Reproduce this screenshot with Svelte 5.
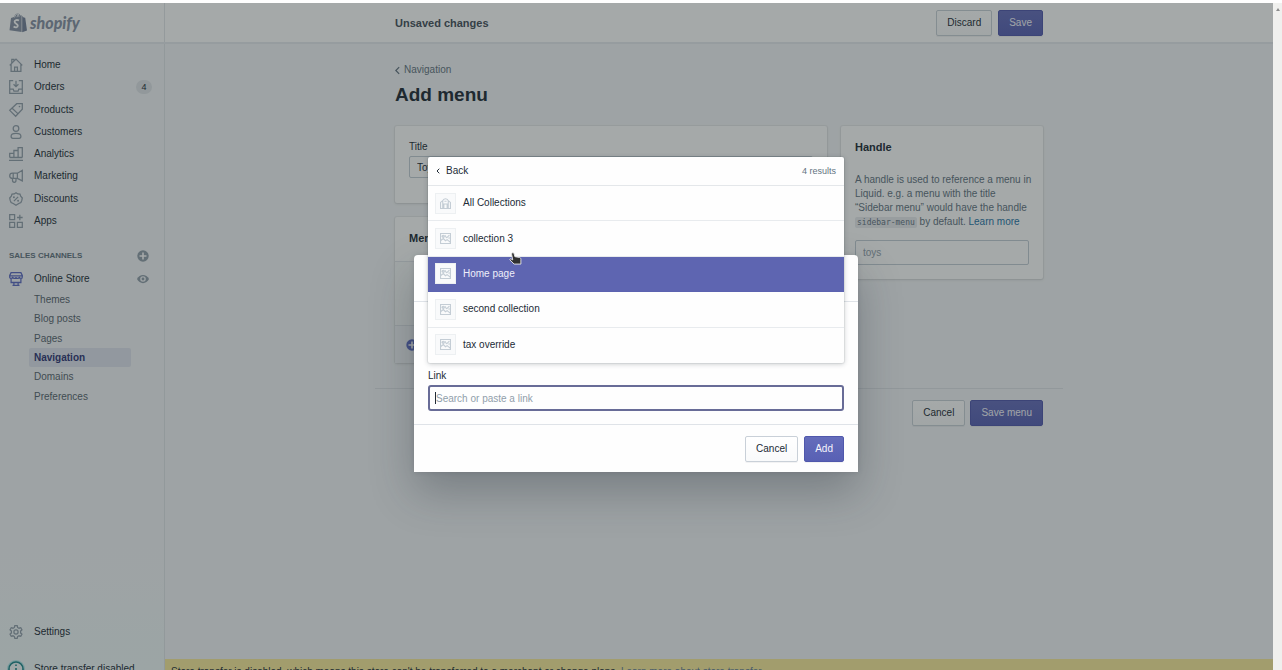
<script>
  const mainNav = [
    { label: 'Home', icon: 'home' },
    { label: 'Orders', icon: 'orders', badge: 4 },
    { label: 'Products', icon: 'products' },
    { label: 'Customers', icon: 'customers' },
    { label: 'Analytics', icon: 'analytics' },
    { label: 'Marketing', icon: 'marketing' },
    { label: 'Discounts', icon: 'discounts' },
    { label: 'Apps', icon: 'apps' },
  ];

  const storeNav = ['Themes', 'Blog posts', 'Pages', 'Navigation', 'Domains', 'Preferences'];

  const results = [
    { label: 'All Collections', icon: 'collection' },
    { label: 'collection 3', icon: 'image' },
    { label: 'Home page', icon: 'image' },
    { label: 'second collection', icon: 'image' },
    { label: 'tax override', icon: 'image' },
  ];

  let title = $state('Toys');
  let handle = $state('');
  let link = $state('');
  let active = $state(2);
</script>

{#snippet icon(name)}
  <svg class="icon" viewBox="0 0 20 20" aria-hidden="true">
    {#if name === 'home'}
      <path d="M1 10.500 10 1.500l9 9M3 9v10h14V9M8 19v-6h4v6M4 7V2h3v2" />
    {:else if name === 'orders'}
      <path d="M6 1H1v18h18V1h-5M10 1v8M6.500 6l3.500 3.500L13.500 6M1 13h5l1 3h6l1-3h5" />
    {:else if name === 'products'}
      <path d="M11 1h8v8l-9.500 10L1 10.500zM4.500 7.500l8.500 8" />
      <circle class="dot" cx="15" cy="5" r="1.200" />
    {:else if name === 'customers'}
      <circle cx="10" cy="5" r="4" />
      <path d="M3 16c0-3 3-4 7-4s7 1 7 4c0 2-1 3-2.500 3h-9C4 19 3 18 3 16z" />
    {:else if name === 'analytics'}
      <path d="M1 15V9h6v6M7 15V5h6v10M13 15V1h6v14M1 15h18M0 19h20" />
    {:else if name === 'marketing'}
      <path d="M19 2v15l-7-3.500H5c-2.500 0-4-1.500-4-3.500s1.500-4 4-4h7zM12 6v7.500M5 13.500V16c0 4 5 4 5 0v-2.500M6 6v7" />
    {:else if name === 'discounts'}
      <path d="m10 1 2.500 1.800 3.200.2 1 3L19 8.500 18.300 12l-1.300 3-3 1.500L10 19l-4-2.500L3 15l-1.300-3L1 8.500 3.300 6l1-3 3.200-.2zM7 13l6-6" />
      <circle class="dot" cx="7" cy="7.500" r="1.400" />
      <circle class="dot" cx="13" cy="12.500" r="1.400" />
    {:else if name === 'apps'}
      <path d="M1 1h7v7H1zM1 12h7v7H1zM12 12h7v7h-7zM15.500 1v8M11.500 5h8" />
    {:else if name === 'store'}
      <path d="M3 1h14l2 4v2c0 3-4 3-4.500 0 0 3-4.500 3-4.500 0 0 3-4.500 3-4.500 0C5 10 1 10 1 7V5zM1 5.500h18M3 9.500V15h14V9.500M7 15v4M13 15v4M5 19h10" />
    {:else if name === 'settings'}
      <path d="M8.300 1h3.400l.6 2.500 2 1.100 2.500-.8 1.700 3-1.900 1.800v2.800l1.900 1.800-1.700 3-2.500-.8-2 1.100-.6 2.500H8.300l-.6-2.500-2-1.100-2.500.8-1.700-3 1.900-1.800V8.600L1.500 6.800l1.700-3 2.500.8 2-1.100z" />
      <circle cx="10" cy="10" r="3" />
    {:else if name === 'image'}
      <path d="M1 1h18v18H1zM1 14l5-4 4 4 3-2 6 5M3 6h4M12 9l5-5M9 4l3 5M15 9h3" />
      <circle cx="6" cy="6" r="2" />
    {:else if name === 'collection'}
      <path d="M1 8l4-3c1-5 9-5 10 0l4 3v11H1zM5 5v14M15 5v14M7 19v-8h6v8M8 6h4" />
    {/if}
  </svg>
{/snippet}

<div class="window">
  <div class="page">
    <header class="topbar">
      <a class="logo" href="#home">
        <svg viewBox="0 0 18 20" aria-hidden="true">
          <path class="bag" d="M2 5l3-1c.6-2 2-3.600 3.800-3.600 1.200 0 2 .8 2.400 2.200l1.400-.4v16.900L.5 17.200z" />
          <path class="side" d="M13.200 3l1.500 1.500 1.500.3 1.800 12.800-4.800 1.600z" />
          <path class="handle" d="M5.600 4.500C6 2.500 7.200 1.200 8.500 1.200c1 0 1.400 1.400 1.400 2.600M8 4.200C8.400 2.500 9 1.500 10 1.200" />
          <path class="mark" d="M10 7.500C8 6.500 5.600 7 5.600 8.800c0 2 3.200 2 3.200 4 0 1.700-2.300 2-4.200.7" />
        </svg>
        <span>shopify</span>
      </a>
      <div class="context">
        <div class="context-inner">
          <h2>Unsaved changes</h2>
          <div class="actions">
            <button class="btn">Discard</button>
            <button class="btn primary">Save</button>
          </div>
        </div>
      </div>
    </header>

    <div class="frame">
      <nav class="sidebar">
        <ul class="nav-main">
          {#each mainNav as item}
            <li>
              <a class="nav-item" href="#{item.icon}">
                {@render icon(item.icon)}
                <span>{item.label}</span>
                {#if item.badge}<span class="badge">{item.badge}</span>{/if}
              </a>
            </li>
          {/each}
        </ul>

        <div class="nav-heading">
          <span>SALES CHANNELS</span>
          <button class="icon-btn" aria-label="Add sales channel">
            <svg viewBox="0 0 12 12"><circle cx="6" cy="6" r="5.700" /><path d="M6 2.500v7M2.500 6h7" /></svg>
          </button>
        </div>

        <a class="nav-item store" href="#store">
          {@render icon('store')}
          <span>Online Store</span>
          <svg class="eye" viewBox="0 0 12 12" aria-hidden="true">
            <path d="M0 6C2.500.5 9.500.5 12 6 9.500 11.500 2.500 11.500 0 6z" />
            <circle class="iris" cx="6" cy="6" r="2.800" />
            <circle cx="6" cy="6" r="1.400" />
          </svg>
        </a>
        <ul class="nav-sub">
          {#each storeNav as item}
            <li><a href="#{item}" class:current={item === 'Navigation'}>{item}</a></li>
          {/each}
        </ul>

        <div class="nav-bottom">
          <a class="nav-item" href="#settings">
            {@render icon('settings')}
            <span>Settings</span>
          </a>
          <a class="nav-item" href="#transfer">
            <svg class="info" viewBox="0 0 18 18" aria-hidden="true">
              <circle cx="9" cy="9" r="7" />
              <path d="M9 4.500V6M9 8v5" />
            </svg>
            <span>Store transfer disabled</span>
          </a>
        </div>
      </nav>

      <main>
        <div class="content">
          <a class="breadcrumb" href="#navigation">
            <svg viewBox="0 0 6 10" aria-hidden="true"><path d="M5 1 1 5l4 4" /></svg>
            Navigation
          </a>
          <h1>Add menu</h1>

          <div class="columns">
            <div class="primary-col">
              <section class="card title-card">
                <label for="title">Title</label>
                <input id="title" type="text" bind:value={title} />
              </section>
              <section class="card">
                <h3 class="card-head">Menu items</h3>
                <div class="empty"></div>
                <div class="card-foot">
                  <button class="icon-btn add" aria-label="Add menu item">
                    <svg viewBox="0 0 12 12"><circle cx="6" cy="6" r="5.700" /><path d="M6 2.500v7M2.500 6h7" /></svg>
                  </button>
                </div>
              </section>
            </div>

            <section class="card handle-card">
              <h3>Handle</h3>
              <p>
                A handle is used to reference a menu in<br />
                Liquid. e.g. a menu with the title<br />
                “Sidebar menu” would have the handle<br />
                <code>sidebar-menu</code> by default. <a href="#learn">Learn more</a>
              </p>
              <input type="text" placeholder="toys" aria-label="Handle" bind:value={handle} />
            </section>
          </div>
        </div>
        <div class="page-actions">
          <button class="btn">Cancel</button>
          <button class="btn primary">Save menu</button>
        </div>

        <div class="banner">
          Store transfer is disabled, which means this store can't be transferred to a merchant or change plans.
          <a href="#transfer">Learn more about store transfer.</a>
        </div>
      </main>
    </div>

    <div class="backdrop">
      <div class="modal" role="dialog" aria-label="Add menu item">
        <div class="modal-head"></div>
        <div class="modal-body">
          <div class="field">
            <label for="link">Link</label>
            <div class="link-box">
              <input id="link" type="text" placeholder="Search or paste a link" bind:value={link} />
              <span class="caret"></span>
            </div>

            <div class="popover">
              <div class="popover-head">
                <button class="back">
                  <svg viewBox="0 0 4 6" aria-hidden="true"><path d="M3.300.7 1 3l2.300 2.300" /></svg>
                  Back
                </button>
                <span class="count">4 results</span>
              </div>
              <ul class="results">
                {#each results as item, i}
                  <li>
                    <button class="result" class:active={i === active} onclick={() => (active = i)}>
                      <span class="thumb">{@render icon(item.icon)}</span>
                      {item.label}
                    </button>
                  </li>
                {/each}
              </ul>
              <svg class="pointer" viewBox="0 0 14 14" aria-hidden="true">
                <path d="M3.500 1c.9-.5 1.700 0 2 1l.8 3 5 .9c1.200.3 1.500 1 1.500 2V13H5.500L1 8.500c-.5-1 .5-1.500 1.300-1L4 8.500 2.800 2.300c-.1-.6.200-1 .7-1.300z" />
              </svg>
            </div>
          </div>
        </div>
        <div class="modal-foot">
          <button class="btn">Cancel</button>
          <button class="btn primary">Add</button>
        </div>
      </div>
    </div>
  </div>

  <div class="scrollbar"><span></span></div>
</div>

<style>
  :global(body) {
    margin: 0;
    background: #fefefe;
  }

  .window {
    box-sizing: border-box;
    display: flex;
    height: 100vh;
    padding-top: 3px;
    overflow: hidden;
    font-family: 'Liberation Sans', Arial, sans-serif;
    font-size: 10px;
    line-height: 14px;
    color: #212b36;
  }

  .window :global(*) {
    box-sizing: border-box;
  }

  button,
  input {
    font: inherit;
    color: inherit;
  }

  a {
    color: inherit;
    text-decoration: none;
  }

  ul {
    list-style: none;
    margin: 0;
    padding: 0;
  }

  h1,
  h2,
  h3,
  p {
    margin: 0;
  }

  .page {
    position: relative;
    flex: 1;
    display: flex;
    flex-direction: column;
    min-width: 0;
    background: #f4f6f8;
  }

  .scrollbar {
    width: 9px;
    padding-top: 5px;
    background: #f0f0ee;
  }

  .scrollbar span {
    display: block;
    width: 0;
    margin: 0 auto;
    border: 2px solid transparent;
    border-top: 0;
    border-bottom: 3px solid #8c8c8c;
  }

  .icon {
    flex: none;
    width: 14px;
    height: 14px;
    overflow: visible;
    fill: none;
    stroke: #919eab;
    stroke-width: 1.8;
  }

  .icon .dot {
    fill: #919eab;
    stroke: none;
  }

  .topbar {
    display: flex;
    height: 41px;
    background: #fff;
    border-bottom: 2px solid #e6eaee;
  }

  .logo {
    display: flex;
    align-items: center;
    gap: 3px;
    width: 165px;
    padding-left: 9px;
    border-right: 1px solid #e3e7ea;
    color: #8792a5;
    font-family: Lato, sans-serif;
    font-size: 16px;
    font-style: italic;
    font-weight: 900;
    line-height: 20px;
  }

  .logo svg {
    width: 18px;
    height: 20px;
  }

  .bag {
    fill: #8792a5;
  }

  .side {
    fill: #76819a;
  }

  .handle {
    fill: none;
    stroke: #fff;
    stroke-width: 0.8;
  }

  .mark {
    fill: none;
    stroke: #fff;
    stroke-width: 1.8;
  }

  .context {
    flex: 1;
    display: flex;
    justify-content: center;
  }

  .context-inner {
    display: flex;
    align-items: center;
    justify-content: space-between;
    width: 648px;
  }

  .context h2 {
    font-size: 11px;
    color: #454f5b;
  }

  .actions {
    display: flex;
    gap: 6px;
  }

  .btn {
    height: 26px;
    padding: 0 10px;
    border: 1px solid #c9d0d8;
    border-radius: 2px;
    background: linear-gradient(#fff, #f9fafb);
    box-shadow: 0 1px 0 rgba(22, 29, 37, 0.05);
    cursor: pointer;
  }

  .btn.primary {
    border-color: #5058ac;
    background: linear-gradient(#656dbb, #5860b4);
    color: #f6f6fc;
  }

  .frame {
    flex: 1;
    display: flex;
    min-height: 0;
  }

  .sidebar {
    display: flex;
    flex-direction: column;
    width: 165px;
    padding-top: 10px;
    border-right: 1px solid #e0e4e8;
    background: linear-gradient(#f4f6f8 80%, #f0f8f9);
  }

  .nav-main {
    display: grid;
    grid-template-rows: repeat(8, 1fr);
    height: 178px;
  }

  .nav-item {
    display: flex;
    align-items: center;
    gap: 11px;
    height: 22px;
    padding: 0 12px 0 9px;
  }

  .badge {
    width: 16px;
    margin-left: auto;
    border-radius: 7px;
    background: #dfe3e8;
    font-size: 9px;
    text-align: center;
  }

  .nav-heading {
    display: flex;
    align-items: center;
    justify-content: space-between;
    margin-top: 17px;
    padding: 0 15px 0 9px;
    font-size: 8px;
    font-weight: bold;
    color: #637381;
  }

  .icon-btn {
    display: flex;
    padding: 0;
    border: 0;
    background: none;
  }

  .icon-btn svg {
    width: 12px;
    height: 12px;
    fill: #919eab;
  }

  .icon-btn path {
    stroke: #fff;
    stroke-width: 1.6;
  }

  .icon-btn.add svg {
    fill: #5c6ac4;
  }

  .store {
    margin-top: 5px;
    padding-right: 15px;
  }

  .store .icon {
    stroke: #5c6ac4;
  }

  .eye {
    width: 12px;
    height: 12px;
    margin-left: auto;
    fill: #919eab;
  }

  .eye .iris {
    fill: #f4f6f8;
  }

  .nav-sub {
    display: grid;
    grid-template-rows: repeat(6, 1fr);
    height: 116px;
    margin: 0 33px 0 29px;
  }

  .nav-sub a {
    display: block;
    padding-left: 5px;
    border-radius: 2px;
    line-height: 19px;
    color: #58646f;
  }

  .nav-sub .current {
    background: #dfe3ee;
    font-weight: bold;
    color: #2f3575;
  }

  .nav-bottom {
    display: flex;
    flex-direction: column;
    gap: 15px;
    margin: auto 0 -10px;
  }

  .info {
    width: 18px;
    height: 18px;
    margin: 0 -2px;
    border-radius: 50%;
    background: #b4e8ea;
    fill: #f4fbfb;
    stroke: #20878c;
    stroke-width: 1.6;
  }

  main {
    position: relative;
    flex: 1;
    display: flex;
    flex-direction: column;
    align-items: center;
    min-width: 0;
  }

  .content {
    width: 648px;
    padding-top: 19px;
  }

  .breadcrumb {
    display: flex;
    align-items: center;
    gap: 4px;
    color: #637381;
  }

  .breadcrumb svg {
    width: 5px;
    height: 9px;
    fill: none;
    stroke: #637381;
    stroke-width: 1.5;
  }

  h1 {
    margin-top: 6px;
    font-size: 19px;
    line-height: 24px;
  }

  .columns {
    display: flex;
    align-items: flex-start;
    gap: 14px;
    margin-top: 19px;
  }

  .primary-col {
    flex: 1;
    display: flex;
    flex-direction: column;
    gap: 14px;
  }

  .card {
    border-radius: 2px;
    background: #fff;
    box-shadow: 0 0 0 1px rgba(63, 63, 68, 0.05), 0 1px 3px rgba(63, 63, 68, 0.15);
  }

  .card h3 {
    font-size: 11px;
  }

  .card input {
    display: block;
    width: 100%;
    height: 25px;
    padding: 0 7px;
    border: 1px solid #c4cdd5;
    border-radius: 2px;
    background: #fff;
    outline: none;
  }

  .title-card {
    height: 77px;
    padding: 14px;
  }

  .title-card input {
    height: 22px;
    margin-top: 2px;
  }

  .card-head {
    padding: 14px 14px 16px;
    border-bottom: 1px solid #e3e7eb;
  }

  .empty {
    height: 63px;
    background: #f9fafb;
  }

  .card-foot {
    display: flex;
    align-items: center;
    height: 38px;
    padding: 0 11px;
    border-top: 1px solid #dfe3e8;
    background: #f4f6f8;
  }

  .handle-card {
    width: 202px;
    padding: 14px;
  }

  .handle-card p {
    margin: 19px 0 11px;
    white-space: nowrap;
    color: #637381;
  }

  .handle-card p a {
    color: #2674a8;
  }

  code {
    padding: 1px 2px;
    border-radius: 2px;
    background: #e9ebef;
    font-family: 'DejaVu Sans Mono', monospace;
    font-size: 8px;
    line-height: 10px;
  }

  input::placeholder {
    color: #919eab;
    opacity: 1;
  }

  .page-actions {
    display: flex;
    justify-content: flex-end;
    gap: 5px;
    width: 688px;
    margin-top: 25px;
    padding: 11px 20px;
    border-top: 1px solid #dfe3e8;
  }

  .banner {
    position: absolute;
    right: 0;
    bottom: -9px;
    left: 0;
    height: 20px;
    padding: 6px;
    overflow: hidden;
    background: #faeb9c;
    white-space: nowrap;
  }

  .banner a {
    color: #637d96;
  }

  .backdrop {
    position: absolute;
    inset: 0;
    display: flex;
    align-items: flex-start;
    justify-content: center;
    padding: 252px 1px 0 0;
    background: rgba(31, 40, 41, 0.4);
  }

  .modal {
    width: 444px;
    border-radius: 4px 4px 0 0;
    background: #fefefe;
    box-shadow: 0 20px 44px rgba(33, 43, 54, 0.3), 0 0 5px rgba(33, 43, 54, 0.15);
  }

  .modal-head {
    height: 47px;
    border-bottom: 1px solid #dfe3e8;
  }

  .modal-body {
    padding: 67px 14px 13px;
  }

  .field {
    position: relative;
  }

  .field label {
    display: block;
  }

  .link-box {
    position: relative;
    margin-top: 2px;
  }

  .link-box input {
    display: block;
    width: 100%;
    height: 26px;
    padding: 0 6px;
    border: 2px solid #686c97;
    border-radius: 3px;
    background: #fefefe;
    outline: none;
  }

  .caret {
    position: absolute;
    top: 7px;
    left: 7px;
    width: 1px;
    height: 12px;
    background: #212b36;
  }

  .popover {
    position: absolute;
    right: 0;
    bottom: 48px;
    left: 0;
    border-radius: 2px;
    background: #fefefe;
    box-shadow: 0 1px 5px rgba(33, 43, 54, 0.25), 0 0 0 1px rgba(33, 43, 54, 0.06);
  }

  .popover-head {
    display: flex;
    align-items: center;
    justify-content: space-between;
    height: 29px;
    padding: 0 8px;
    border-bottom: 1px solid #e4e7ea;
  }

  .back {
    display: flex;
    align-items: center;
    gap: 6px;
    padding: 0;
    border: 0;
    background: none;
  }

  .back svg {
    width: 4px;
    height: 6px;
    fill: none;
    stroke: #212b36;
  }

  .count {
    font-size: 9px;
    color: #637381;
  }

  .results {
    display: grid;
    grid-template-rows: repeat(5, 1fr);
    height: 177px;
  }

  .result {
    display: flex;
    align-items: center;
    gap: 7px;
    width: 100%;
    height: 100%;
    padding: 0 7px;
    border: 0;
    border-bottom: 1px solid #e8ebee;
    background: none;
    text-align: left;
  }

  li:last-child .result {
    border-bottom-color: transparent;
  }

  .result.active {
    border-bottom-color: #5c63b0;
    background: #5e65b1;
    color: #eeeffa;
  }

  .thumb {
    display: flex;
    align-items: center;
    justify-content: center;
    width: 21px;
    height: 21px;
    border: 1px solid #edf0f2;
    background: #f9fafb;
  }

  .thumb .icon {
    width: 11px;
    height: 11px;
    stroke: #c4cdd5;
    stroke-width: 2;
  }

  .pointer {
    position: absolute;
    top: 95px;
    left: 81px;
    width: 13px;
    height: 13px;
    fill: #303030;
    stroke: #e8e8e8;
    stroke-width: 1;
  }

  .modal-foot {
    display: flex;
    justify-content: flex-end;
    gap: 6px;
    padding: 11px 14px 10px;
    border-top: 1px solid #dfe3e8;
  }
</style>
